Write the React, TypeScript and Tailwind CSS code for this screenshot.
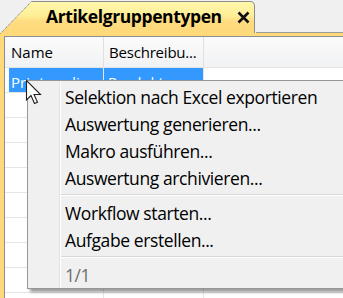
import React from "react";

const font = { fontFamily: '"Open Sans", "Noto Sans", sans-serif' };

function MenuItem({ children, muted }: { children: React.ReactNode; muted?: boolean }) {
  return (
    <div className={`h-[27px] flex items-center pl-[4px] text-[17.5px] tracking-[-0.4px] whitespace-nowrap ${muted ? "text-[#6d6d6d]" : "text-black"}`}>
      {children}
    </div>
  );
}

function Sep() {
  return (
    <div className="h-[8px] flex flex-col justify-center">
      <div className="h-px bg-[#d7d7d7]" />
      <div className="h-px bg-white" />
    </div>
  );
}

function Row({ first, second, selected }: { first?: string; second?: string; selected?: boolean }) {
  return (
    <div className="flex h-[25px] shrink-0 border-b border-[#e6e6e6]">
      <div className="w-[4px]" />
      <div className={`w-[95px] border-r border-[#e6e6e6] pl-[2px] pt-[5px] flex items-center overflow-hidden whitespace-nowrap text-[15px] text-white ${selected ? "bg-[#3399ff]" : ""}`}>
        {first}
      </div>
      <div className={`w-[100px] border-r border-[#e6e6e6] pl-[4px] pt-[5px] flex items-center overflow-hidden whitespace-nowrap text-[15px] text-white ${selected ? "bg-[#3399ff]" : ""}`}>
        {second}
      </div>
      <div className="flex-1" />
    </div>
  );
}

export default function App() {
  return (
    <div className="relative w-[343px] h-[298px] overflow-hidden bg-[#f0f0f0] flex flex-col" style={font}>
      {/* Tab strip */}
      <div className="flex h-[33px] shrink-0">
        <div className="relative w-[256px] h-full">
          <svg className="absolute left-0 top-0" width="256" height="34" viewBox="0 0 256 34">
            <defs>
              <linearGradient id="tabg" x1="0" y1="0" x2="0" y2="1">
                <stop offset="0" stopColor="#fff7ac" />
                <stop offset="0.45" stopColor="#ffee96" />
                <stop offset="0.6" stopColor="#ffdc80" />
                <stop offset="1" stopColor="#ffd97a" />
              </linearGradient>
            </defs>
            <path d="M0,34 L31.5,1.5 H250 Q254.5,1.5 254.5,6 V34 Z" fill="url(#tabg)" />
            <path d="M0.5,33.5 L31.5,1.5" stroke="#6a6a6a" strokeWidth="1" strokeDasharray="1 1" fill="none" />
            <path d="M31.5,1.5 H250 Q254.5,1.5 254.5,6 V33" stroke="#8c8c8c" strokeWidth="1" fill="none" />
          </svg>
          <div className="relative flex items-center h-full pl-[46px] pt-[1px]">
            <span className="font-bold text-[17.5px] text-black leading-none tracking-[-0.4px]">Artikelgruppentypen</span>
            <svg className="ml-[15px]" width="13" height="13" viewBox="0 0 13 13">
              <path d="M1.5,1.5 L11.5,11.5 M11.5,1.5 L1.5,11.5" stroke="#111" strokeWidth="2.6" strokeLinecap="butt" />
            </svg>
          </div>
        </div>
        <div className="flex-1 border-b border-[#9a9a9a]" />
      </div>

      {/* Frame */}
      <div className="flex-1 bg-[#ffd97a] pt-[3px] pl-[4px] flex flex-col min-h-0">
        <div className="flex-1 bg-white border-l border-t border-[#8a8f96] flex flex-col min-h-0 overflow-hidden">
          {/* Header */}
          <div className="flex h-[31px] shrink-0 border-b border-[#e3e3e3] bg-gradient-to-b from-[#fbfbfc] to-[#f1f2f3] text-[15px] text-black">
            <div className="w-[99px] border-r border-[#e0e0e0] pl-[6px] flex items-center">Name</div>
            <div className="w-[100px] border-r border-[#e0e0e0] pl-[5px] flex items-center tracking-[-0.2px]">Beschreibu...</div>
            <div className="flex-1" />
          </div>
          <Row first="Printmedien" second="Produkte" selected />
          <Row />
          <Row />
          <Row />
          <Row />
          <Row />
          <Row />
          <Row />
          <Row />
          <Row />
        </div>
      </div>

      {/* Context menu */}
      <div className="absolute left-[27px] top-[80px] w-[330px] h-[209px] bg-[#f0f0f0] border border-[#979797] shadow-[3px_3px_3px_rgba(0,0,0,0.4)] flex">
        <div className="w-[31px] shrink-0" />
        <div className="w-px bg-[#e2e2e2] shrink-0" />
        <div className="w-px bg-white shrink-0" />
        <div className="flex-1 flex flex-col pt-[3px]">
          <MenuItem>Selektion nach Excel exportieren</MenuItem>
          <MenuItem>Auswertung generieren...</MenuItem>
          <MenuItem>Makro ausführen...</MenuItem>
          <MenuItem>Auswertung archivieren...</MenuItem>
          <Sep />
          <MenuItem>Workflow starten...</MenuItem>
          <MenuItem>Aufgabe erstellen...</MenuItem>
          <Sep />
          <MenuItem muted>1/1</MenuItem>
        </div>
      </div>

      {/* Cursor */}
      <svg className="absolute left-[25px] top-[79px]" width="20" height="27" viewBox="0 0 20 27">
        <path d="M1.5,1.5 L1.5,21 L6,16.5 L9.5,24.5 L12.5,23.2 L9,15.5 L15.5,15.5 Z" fill="#fff" stroke="#222" strokeWidth="1.1" strokeLinejoin="miter" />
      </svg>
    </div>
  );
}
